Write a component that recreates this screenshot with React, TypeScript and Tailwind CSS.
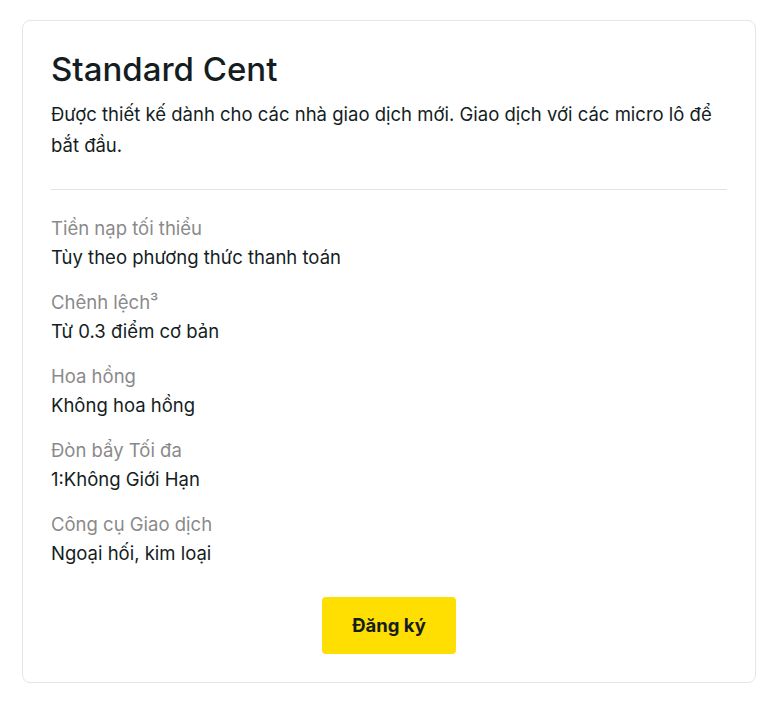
const FEATURES = [
  { label: "Tiền nạp tối thiểu", value: "Tùy theo phương thức thanh toán" },
  { label: "Chênh lệch³", value: "Từ 0.3 điểm cơ bản" },
  { label: "Hoa hồng", value: "Không hoa hồng" },
  { label: "Đòn bẩy Tối đa", value: "1:Không Giới Hạn" },
  { label: "Công cụ Giao dịch", value: "Ngoại hối, kim loại" },
];

export default function App() {
  return (
    <div className="min-h-[703px] bg-white pt-[20px] pl-[22px] font-['Inter','Noto_Sans',sans-serif]">
      <div className="w-[734px] rounded-lg border border-[#e6e6e6] bg-white px-[28px] pt-[28px] pb-[28px]">
        <h2 className="text-[33px] leading-[40px] font-medium text-[#141d22]">Standard Cent</h2>
        <p className="mt-[10px] text-[18.5px] leading-[31px] text-[#141d22]">
          Được thiết kế dành cho các nhà giao dịch mới. Giao dịch với các micro lô để bắt đầu.
        </p>
        <div className="mt-[28px] h-px bg-[#e3e3e3]" />
        <div className="mt-[24px] flex flex-col gap-[16px]">
          {FEATURES.map((f) => (
            <div key={f.label}>
              <div className="text-[18.5px] leading-[28px] text-[#8a8a8a]">{f.label}</div>
              <div className="text-[18.5px] leading-[30px] text-[#141d22]">{f.value}</div>
            </div>
          ))}
        </div>
        <div className="mt-[29px] flex justify-center">
          <button className="h-[57px] w-[134px] rounded-[4px] bg-[#ffde02] text-[18.5px] font-bold text-[#141d22]">
            Đăng ký
          </button>
        </div>
      </div>
    </div>
  );
}
